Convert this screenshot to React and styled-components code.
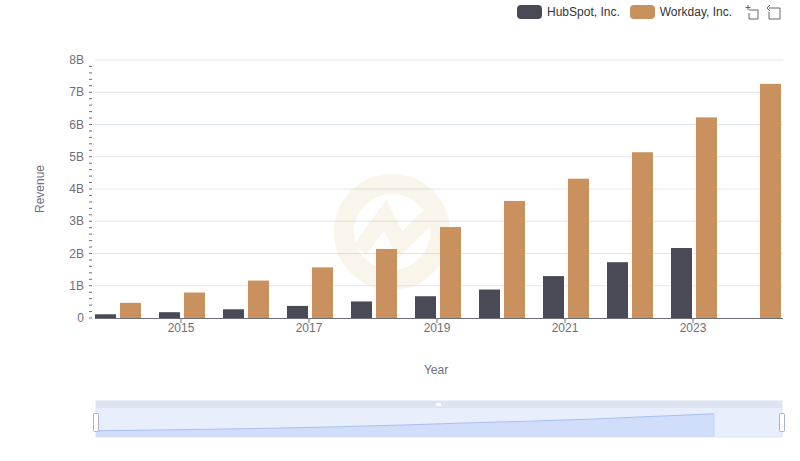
import React from "react";
import styled, { createGlobalStyle } from "styled-components";

const Global = createGlobalStyle`
  body { margin: 0; background: #fff; font-family: "Liberation Sans", Arial, sans-serif; }
`;
const Page = styled.div`
  position: relative; width: 800px; height: 461px; overflow: hidden;
`;
const Legend = styled.div`
  position: absolute; top: 4px; right: 18px; display: flex; align-items: center; gap: 10px;
  font-size: 12px; color: #333;
`;
const Item = styled.div` display: flex; align-items: center; gap: 5px; `;
const Swatch = styled.span`
  width: 25px; height: 14px; border-radius: 4px; background: ${p => p.c};
`;
const Tools = styled.div` display: flex; gap: 6px; margin-left: 2px; `;

const hub = [0.116, 0.18, 0.27, 0.375, 0.513, 0.675, 0.883, 1.3, 1.73, 2.17, null];
const wd = [0.47, 0.79, 1.16, 1.57, 2.14, 2.82, 3.63, 4.32, 5.14, 6.22, 7.26];
const y0 = 318, k = 32.25;
const cx = i => 117 + 64 * i;

function Chart() {
  const minor = [];
  for (let v = 0; v <= 8; v += 0.2) minor.push(v);
  const area = wd.map((v, i) => `${96 + i * 61.8},${432 - v * 2.5}`).join(" L");
  return (
    <svg width="800" height="461" style={{ position: "absolute", left: 0, top: 0 }}>
      <g fontFamily="Liberation Sans, Arial, sans-serif" fontSize="12" fill="#6e7079">
        {[1,2,3,4,5,6,7,8].map(v => (
          <line key={v} x1="95" x2="783" y1={y0 - v * k} y2={y0 - v * k} stroke="#e0e6f1" />
        ))}
        {minor.map((v, i) => (
          <line key={i} x1="89" x2="92" y1={y0 - v * k} y2={y0 - v * k} stroke="#6e7079" strokeWidth="1" />
        ))}
        {[0,1,2,3,4,5,6,7,8].map(v => (
          <text key={v} x="84" y={y0 - v * k + 4} textAnchor="end">{v === 0 ? "0" : v + "B"}</text>
        ))}
        <text transform="translate(44 189) rotate(-90)" textAnchor="middle">Revenue</text>
        <text x="436" y="374" textAnchor="middle">Year</text>
        {[2015, 2017, 2019, 2021, 2023].map((y, j) => (
          <g key={y}>
            <line x1={cx(1 + 2 * j)} x2={cx(1 + 2 * j)} y1="318" y2="323" stroke="#6e7079" />
            <text x={cx(1 + 2 * j)} y="332" textAnchor="middle">{y}</text>
          </g>
        ))}
        <g opacity="0.1">
          <circle cx="392" cy="232" r="48" fill="none" stroke="#d4a34a" strokeWidth="20" />
          <path d="M360 250 L385 215 L400 245 L440 205" stroke="#d4a34a" strokeWidth="16" fill="none" />
        </g>
        {hub.map((v, i) => v != null && (
          <rect key={"h" + i} x={cx(i) - 22} y={y0 - v * k} width="21" height={v * k} fill="#4a4a56" />
        ))}
        {wd.map((v, i) => (
          <rect key={"w" + i} x={cx(i) + 3} y={y0 - v * k} width="21" height={v * k} fill="#c8915e" />
        ))}
        <line x1="95" x2="783" y1="318.5" y2="318.5" stroke="#6e7079" />
        {/* data zoom */}
        <rect x="96" y="401" width="686" height="36" fill="#e8eefc" stroke="#dde3f0" />
        <rect x="96" y="401" width="686" height="7" fill="#dde3f0" />
        <rect x="436" y="403" width="5" height="3" fill="#fff" />
        <path d={`M96,432 L${area} L714,437 L96,437 Z`} fill="#d1defa" />
        <path d={`M96,432 L${area}`} fill="none" stroke="#a8c0f0" />
        <line x1="714" x2="714" y1="414" y2="437" stroke="#c5d4f5" />
        <rect x="93.5" y="413.5" width="5" height="18" fill="#fff" stroke="#a8b2c8" rx="1" />
        <rect x="779.5" y="413.5" width="5" height="18" fill="#fff" stroke="#a8b2c8" rx="1" />
      </g>
    </svg>
  );
}

export default function App() {
  return (
    <Page>
      <Global />
      <Chart />
      <Legend>
        <Item><Swatch c="#4a4a56" />HubSpot, Inc.</Item>
        <Item><Swatch c="#c8915e" />Workday, Inc.</Item>
        <Tools>
          <svg width="16" height="16" viewBox="0 0 16 16" fill="none" stroke="#666">
            <path d="M4 1v5M1.5 3.5h5M5 6h9v9H5V9" />
          </svg>
          <svg width="16" height="16" viewBox="0 0 16 16" fill="none" stroke="#666">
            <path d="M3 4h11v11H3V8M1 4l3-3M1 4l3 3" />
          </svg>
        </Tools>
      </Legend>
    </Page>
  );
}
